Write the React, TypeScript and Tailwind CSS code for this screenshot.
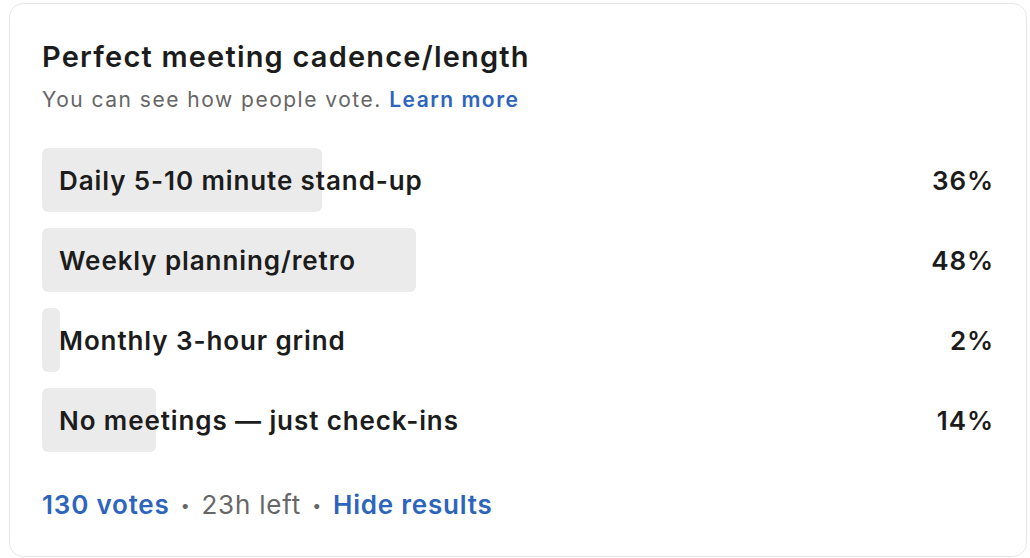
const options = [
  { label: 'Daily 5-10 minute stand-up', pct: 36, width: 280 },
  { label: 'Weekly planning/retro', pct: 48, width: 374 },
  { label: 'Monthly 3-hour grind', pct: 2, width: 18 },
  { label: 'No meetings — just check-ins', pct: 14, width: 114 },
];

export default function App() {
  return (
    <div className="w-[1030px] h-[558px] bg-white pl-[9px] pt-[3px] font-['Inter',sans-serif]">
      <div className="w-[1018px] h-[554px] border border-[#e6e6e6] rounded-[14px] px-[32px] pt-[35px] flex flex-col">
        <h2 className="text-[29px] leading-[36px] font-semibold text-[#1c1c1c] tracking-[1.2px]">
          Perfect meeting cadence/length
        </h2>
        <p className="mt-[11px] text-[21px] leading-[28px] text-[#666666] tracking-[1.5px]">
          You can see how people vote.{' '}
          <span className="font-semibold text-[#2d65bd]">Learn more</span>
        </p>

        <div className="mt-[34px] flex flex-col gap-4">
          {options.map((o) => (
            <div key={o.label} className="relative h-16 flex items-center justify-between">
              <div
                className="absolute left-0 top-0 h-16 rounded-[6px] bg-[#ebebeb]"
                style={{ width: o.width }}
              />
              <span className="relative pl-[17px] text-[26px] font-semibold text-[#1c1c1c] tracking-[0.9px]">
                {o.label}
              </span>
              <span className="relative text-[26px] font-semibold text-[#1c1c1c] tracking-[0.9px]">
                {o.pct}%
              </span>
            </div>
          ))}
        </div>

        <div className="mt-[37px] flex items-center text-[26px] leading-[32px] tracking-[0.8px]">
          <span className="font-semibold text-[#2d65bd]">130 votes</span>
          <span className="mx-[11px] text-[#666666] text-[16px]">•</span>
          <span className="text-[#666666]">23h left</span>
          <span className="mx-[11px] text-[#666666] text-[16px]">•</span>
          <span className="font-semibold text-[#2d65bd]">Hide results</span>
        </div>
      </div>
    </div>
  );
}
